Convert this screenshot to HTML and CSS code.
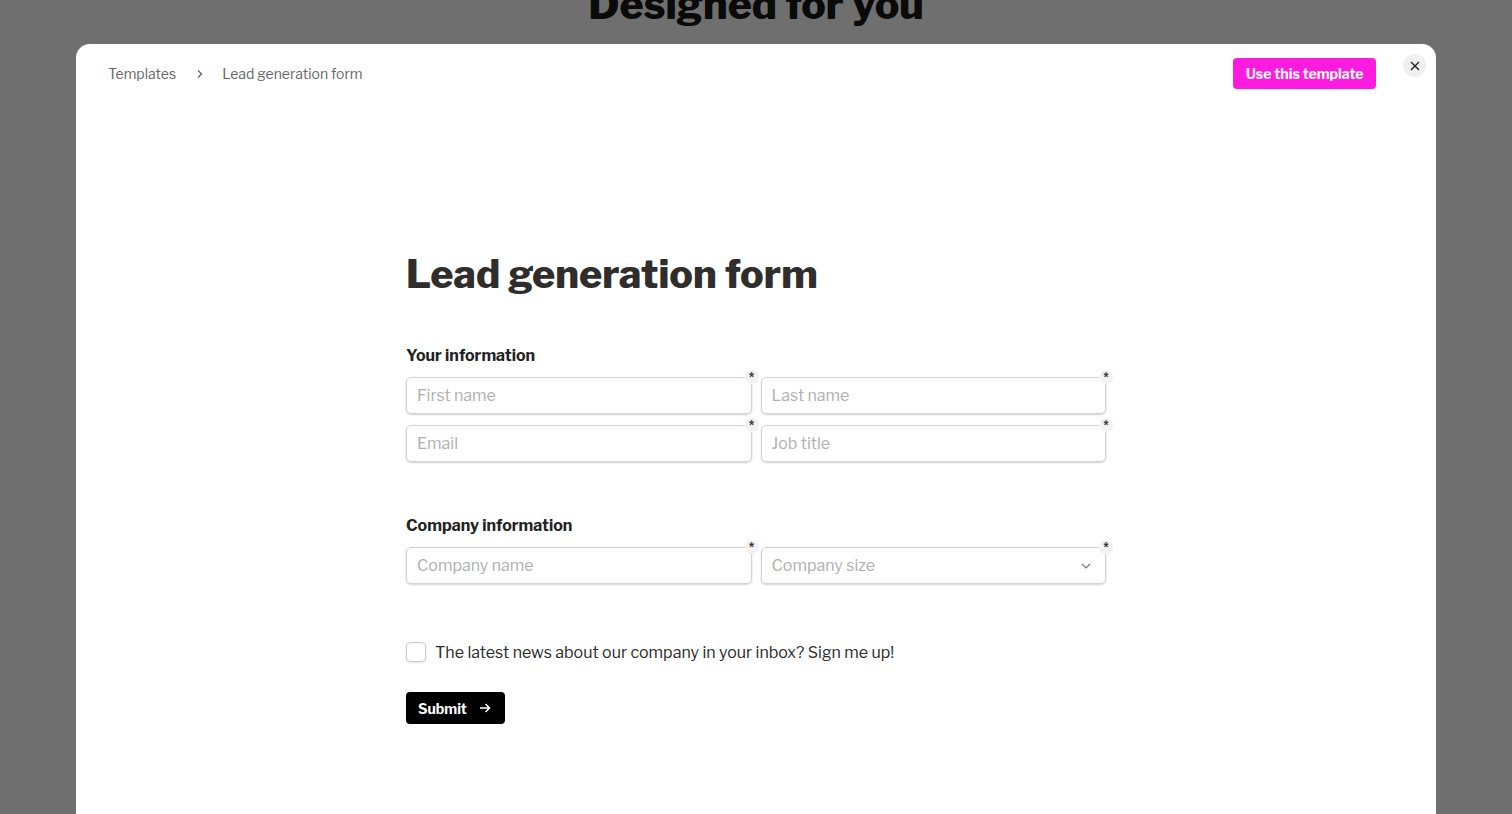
FILE: index.html
```html
<!DOCTYPE html>
<html>
<head>
<meta charset="utf-8">
<link rel="stylesheet" href="styles.css">
</head>
<body>
<div class="backdrop">
  <h2 class="bg-title">Designed for you</h2>
  <div class="modal">
    <header class="modal-head">
      <nav class="crumbs">
        <span>Templates</span>
        <svg class="chev" width="8" height="10" viewBox="0 0 8 10"><path d="M2 1.5 L5.5 5 L2 8.5" fill="none" stroke="#666" stroke-width="1.3"/></svg>
        <span>Lead generation form</span>
      </nav>
      <div class="head-actions">
        <button class="use-btn">Use this template</button>
        <button class="close-btn" aria-label="close"><svg width="10" height="10" viewBox="0 0 10 10"><path d="M1 1 L9 9 M9 1 L1 9" stroke="#222" stroke-width="1.4"/></svg></button>
      </div>
    </header>
    <main class="form-wrap">
      <h1 class="form-title">Lead generation form</h1>
      <section class="group">
        <h3 class="group-title">Your information</h3>
        <div class="grid">
          <div class="field"><div class="input">First name</div><span class="req">*</span></div>
          <div class="field"><div class="input">Last name</div><span class="req">*</span></div>
          <div class="field"><div class="input">Email</div><span class="req">*</span></div>
          <div class="field"><div class="input">Job title</div><span class="req">*</span></div>
        </div>
      </section>
      <section class="group group2">
        <h3 class="group-title">Company information</h3>
        <div class="grid">
          <div class="field"><div class="input">Company name</div><span class="req">*</span></div>
          <div class="field"><div class="input select">Company size<svg width="10" height="6" viewBox="0 0 10 6"><path d="M1 1 L5 5 L9 1" fill="none" stroke="#777" stroke-width="1.2"/></svg></div><span class="req">*</span></div>
        </div>
      </section>
      <label class="check-row"><span class="box"></span><span>The latest news about our company in your inbox? Sign me up!</span></label>
      <button class="submit">Submit <svg width="12" height="12" viewBox="0 0 12 12"><path d="M1 6 H10.5 M6.5 2 L10.5 6 L6.5 10" fill="none" stroke="#fff" stroke-width="1.5"/></svg></button>
    </main>
  </div>
</div>
</body>
</html>
```
FILE: styles.css
```css
* { box-sizing: border-box; }
html, body { margin: 0; height: 100%; overflow: hidden; }
body { font-family: "Libre Franklin", "Inter", "Liberation Sans", sans-serif; background: #6f6f6f; }
.backdrop { position: relative; height: 814px; background: #6f6f6f; display: flex; flex-direction: column; align-items: center; }
.bg-title { margin: -22px 0 0; font-size: 41px; font-weight: 800; color: #0a0a0a; line-height: 52px; height: 66px; }
.modal { width: 1360px; flex: 1; background: #fff; border-radius: 14px 14px 0 0; display: flex; flex-direction: column; }
.modal-head { display: flex; justify-content: space-between; align-items: flex-start; padding: 14px 10px 0 32px; }
.crumbs { display: flex; align-items: center; gap: 0; font-size: 14px; color: #666; margin-top: 7px; }
.crumbs .chev { margin: 0 18px 0 20px; }
.head-actions { display: flex; align-items: flex-start; gap: 27px; }
.use-btn { background: #ff1ae0; color: #fff; border: 0; border-radius: 4px; height: 31px; padding: 0 12.5px; font-family: inherit; font-size: 14px; font-weight: 700; }
.close-btn { width: 23px; height: 23px; border-radius: 50%; background: #f0f0f0; border: 0; padding: 0; display: flex; align-items: center; justify-content: center; margin-top: -4px; }
.form-wrap { width: 700px; margin: 0 auto; padding-top: 160px; }
.form-title { margin: 0; font-size: 39.5px; font-weight: 800; color: #2f2e2c; line-height: 50px; }
.group { margin-top: 47px; }
.group2 { margin-top: 54px; }
.group-title { margin: 0 0 11px; font-size: 16px; font-weight: 700; color: #222; line-height: 20px; }
.grid { display: grid; grid-template-columns: 1fr 1fr; gap: 11px 9px; }
.field { position: relative; }
.input { height: 37px; border: 1px solid #d3d3d3; border-radius: 5px; box-shadow: 0 1px 2px rgba(0,0,0,0.18); padding: 0 10px; display: flex; align-items: center; justify-content: space-between; font-size: 16px; color: #b0b0b0; }
.input.select { padding-right: 14px; }
.req { position: absolute; top: -7px; right: -7px; width: 14px; height: 14px; border-radius: 50%; background: #f2f2f2; font-size: 12px; font-weight: 700; color: #333; display: flex; justify-content: center; line-height: 16px; }
.check-row { display: flex; align-items: center; gap: 9px; margin-top: 58px; font-size: 16px; color: #2a2a2a; }
.box { width: 20px; height: 20px; border: 1px solid #ccc; border-radius: 4px; box-shadow: 0 1px 2px rgba(0,0,0,0.12); }
.submit { margin-top: 30px; display: flex; align-items: center; gap: 12px; background: #000; color: #fff; border: 0; border-radius: 4px; height: 32px; padding: 0 14px 0 12px; font-family: inherit; font-size: 14px; font-weight: 700; }
```
